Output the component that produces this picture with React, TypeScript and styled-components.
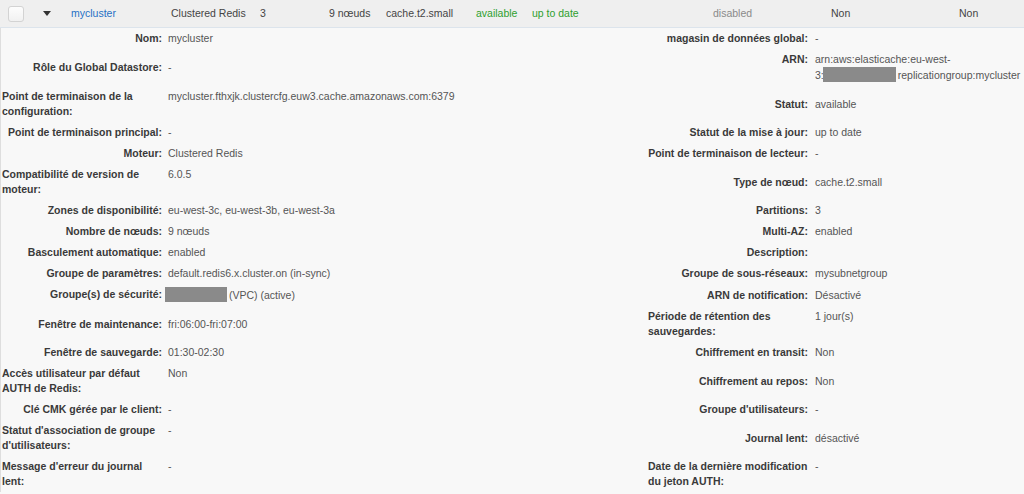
import React from 'react';
import styled, { createGlobalStyle } from 'styled-components';

const GlobalStyle = createGlobalStyle`
  html, body {
    margin: 0;
    padding: 0;
    background: #f8f8f8;
  }
  body {
    font-family: "Liberation Sans", Arial, Helvetica, sans-serif;
    font-size: 10.5px;
    color: #444;
  }
`;

type Side = 'left' | 'right';

const Page = styled.div`
  width: 1024px;
  height: 494px;
  overflow: hidden;
  background: #f8f8f8;
`;

// summary row of the cluster table
const HeaderRow = styled.div`
  display: grid;
  grid-template-columns: 36px 35px 100px 89px 69px 57px 90px 56px 181px 118px 128px 1fr;
  align-items: center;
  height: 27px;
  background: #efefef;
  border-bottom: 1px solid #dce4ec;
`;

const HeaderCell = styled.div<{ $tone?: 'link' | 'ok' | 'muted' }>`
  white-space: nowrap;
  line-height: 15px;
  color: ${p => (p.$tone === 'link' ? '#1f6fc5' : p.$tone === 'ok' ? '#2e9f2e' : p.$tone === 'muted' ? '#8a8a8a' : '#444')};
`;

const CheckCell = styled.div`
  padding-left: 8px;
  display: flex;
  align-items: center;
`;

const CheckBox = styled.span`
  display: block;
  width: 14px;
  height: 14px;
  border: 1px solid #d3d3d3;
  border-radius: 3px;
  background: linear-gradient(#fdfdfd, #f1f1f1);
`;

const CaretCell = styled.div`
  padding-left: 7px;
  display: flex;
  align-items: center;
`;

const Caret = styled.span`
  display: block;
  width: 0;
  height: 0;
  border-left: 4px solid transparent;
  border-right: 4px solid transparent;
  border-top: 5px solid #333;
`;

const Details = styled.div`
  display: grid;
  grid-template-columns: 647px 1fr;
  align-items: center;
  border-left: 1px solid #dedede;
`;

const Pair = styled.div<{ $side: Side }>`
  display: flex;
  align-items: flex-start;
  gap: ${p => (p.$side === 'right' ? 7 : 6)}px;
  padding: 3px 0;
  line-height: 15px;
`;

const LabelCell = styled.div<{ $side: Side }>`
  flex: none;
  width: ${p => (p.$side === 'left' ? 161 : 160)}px;
  padding-left: ${p => (p.$side === 'left' ? 1 : 0)}px;
  box-sizing: border-box;
  text-align: right;
`;

const Label = styled.span<{ $wrap?: boolean }>`
  display: ${p => (p.$wrap ? 'block' : 'inline')};
  text-align: ${p => (p.$wrap ? 'left' : 'right')};
  white-space: ${p => (p.$wrap ? 'pre-line' : 'nowrap')};
  font-weight: bold;
  color: #3a3a3a;
`;

const Value = styled.div`
  color: #555;
  white-space: nowrap;
`;

const Masked = styled.span<{ $w: number; $shift?: number }>`
  display: inline-block;
  width: ${p => p.$w}px;
  height: 15px;
  margin-left: ${p => p.$shift ?? 0}px;
  margin-right: 2px;
  vertical-align: -3px;
  background: #8a8a8a;
`;

type Item = { label: string; value: React.ReactNode };

const rows: [Item, Item][] = [
  [{ label: 'Nom:', value: 'mycluster' }, { label: 'magasin de données global:', value: '-' }],
  [
    { label: 'Rôle du Global Datastore:', value: '-' },
    {
      label: 'ARN:',
      value: (
        <>
          arn:aws:elasticache:eu-west-
          <br />
          3:<Masked $w={73} $shift={-1} />replicationgroup:mycluster
        </>
      ),
    },
  ],
  [
    { label: 'Point de terminaison de la\nconfiguration:', value: 'mycluster.fthxjk.clustercfg.euw3.cache.amazonaws.com:6379' },
    { label: 'Statut:', value: 'available' },
  ],
  [{ label: 'Point de terminaison principal:', value: '-' }, { label: 'Statut de la mise à jour:', value: 'up to date' }],
  [{ label: 'Moteur:', value: 'Clustered Redis' }, { label: 'Point de terminaison de lecteur:', value: '-' }],
  [{ label: 'Compatibilité de version de\nmoteur:', value: '6.0.5' }, { label: 'Type de nœud:', value: 'cache.t2.small' }],
  [{ label: 'Zones de disponibilité:', value: 'eu-west-3c, eu-west-3b, eu-west-3a' }, { label: 'Partitions:', value: '3' }],
  [{ label: 'Nombre de nœuds:', value: '9 nœuds' }, { label: 'Multi-AZ:', value: 'enabled' }],
  [{ label: 'Basculement automatique:', value: 'enabled' }, { label: 'Description:', value: '' }],
  [{ label: 'Groupe de paramètres:', value: 'default.redis6.x.cluster.on (in-sync)' }, { label: 'Groupe de sous-réseaux:', value: 'mysubnetgroup' }],
  [
    { label: 'Groupe(s) de sécurité:', value: <><Masked $w={62} $shift={-3} />(VPC) (active)</> },
    { label: 'ARN de notification:', value: 'Désactivé' },
  ],
  [{ label: 'Fenêtre de maintenance:', value: 'fri:06:00-fri:07:00' }, { label: 'Période de rétention des\nsauvegardes:', value: '1 jour(s)' }],
  [{ label: 'Fenêtre de sauvegarde:', value: '01:30-02:30' }, { label: 'Chiffrement en transit:', value: 'Non' }],
  [{ label: 'Accès utilisateur par défaut\nAUTH de Redis:', value: 'Non' }, { label: 'Chiffrement au repos:', value: 'Non' }],
  [{ label: 'Clé CMK gérée par le client:', value: '-' }, { label: "Groupe d'utilisateurs:", value: '-' }],
  [{ label: "Statut d'association de groupe\nd'utilisateurs:", value: '-' }, { label: 'Journal lent:', value: 'désactivé' }],
  [{ label: "Message d'erreur du journal\nlent:", value: '-' }, { label: 'Date de la dernière modification\ndu jeton AUTH:', value: '-' }],
];

const Field: React.FC<{ item: Item; side: Side }> = ({ item, side }) => (
  <Pair $side={side}>
    <LabelCell $side={side}>
      <Label $wrap={item.label.includes('\n')}>{item.label}</Label>
    </LabelCell>
    <Value>{item.value}</Value>
  </Pair>
);

export default function App() {
  return (
    <Page>
      <GlobalStyle />
      <HeaderRow>
        <CheckCell>
          <CheckBox />
        </CheckCell>
        <CaretCell>
          <Caret />
        </CaretCell>
        <HeaderCell $tone="link">mycluster</HeaderCell>
        <HeaderCell>Clustered Redis</HeaderCell>
        <HeaderCell>3</HeaderCell>
        <HeaderCell>9 nœuds</HeaderCell>
        <HeaderCell>cache.t2.small</HeaderCell>
        <HeaderCell $tone="ok">available</HeaderCell>
        <HeaderCell $tone="ok">up to date</HeaderCell>
        <HeaderCell $tone="muted">disabled</HeaderCell>
        <HeaderCell>Non</HeaderCell>
        <HeaderCell>Non</HeaderCell>
      </HeaderRow>
      <Details>
        {rows.map(([left, right], i) => (
          <React.Fragment key={i}>
            <Field item={left} side="left" />
            <Field item={right} side="right" />
          </React.Fragment>
        ))}
      </Details>
    </Page>
  );
}
